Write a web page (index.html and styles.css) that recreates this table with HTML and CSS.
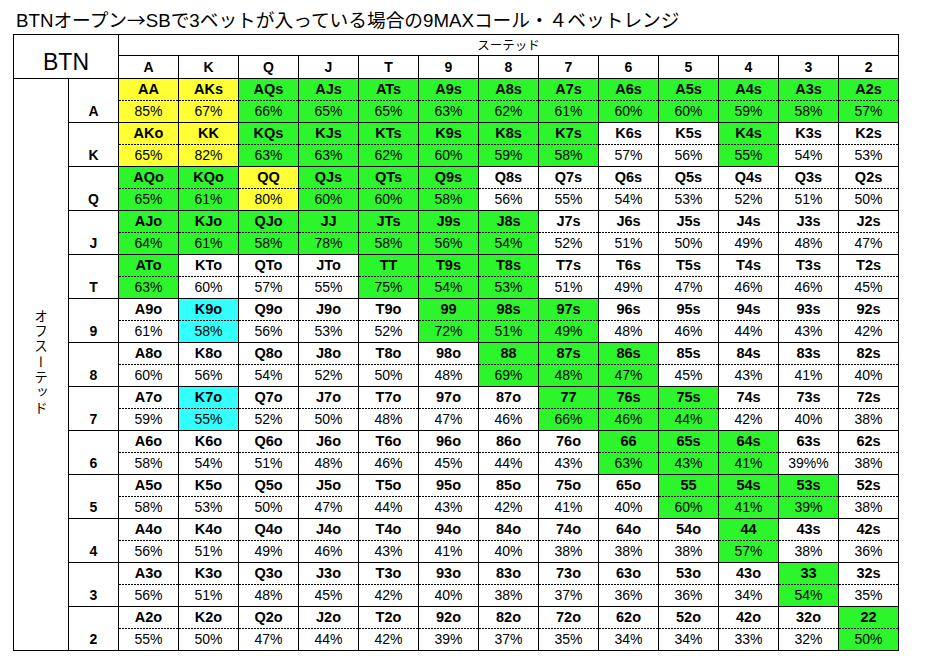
FILE: index.html
```html
<!DOCTYPE html>
<html lang="ja">
<head>
<meta charset="utf-8">
<title>BTN 9MAX range</title>
<link rel="stylesheet" href="styles.css">
</head>
<body>
<div class="page">
<div class="title">BTNオープン<span class="arrow">→</span>SBで3ベットが入っている場合の9MAXコール・４ベットレンジ</div>
<table class="range">
<colgroup><col class="c1"><col class="c2"><col class="cc"><col class="cc"><col class="cc"><col class="cc"><col class="cc"><col class="cc"><col class="cc"><col class="cc"><col class="cc"><col class="cc"><col class="cc"><col class="cc"><col class="cc"></colgroup>
<tr class="hr1"><th class="corner" colspan="2" rowspan="2">BTN</th><th class="suited" colspan="13">スーテッド</th></tr>
<tr class="hr2"><th>A</th><th>K</th><th>Q</th><th>J</th><th>T</th><th>9</th><th>8</th><th>7</th><th>6</th><th>5</th><th>4</th><th>3</th><th>2</th></tr>
<tr><th class="off" rowspan="13"><span>オフスーテッド</span></th><th class="rk"><span>A</span></th>
<td class="y"><div class="h">AA</div><div class="p">85%</div></td>
<td class="y"><div class="h">AKs</div><div class="p">67%</div></td>
<td class="g"><div class="h">AQs</div><div class="p">66%</div></td>
<td class="g"><div class="h">AJs</div><div class="p">65%</div></td>
<td class="g"><div class="h">ATs</div><div class="p">65%</div></td>
<td class="g"><div class="h">A9s</div><div class="p">63%</div></td>
<td class="g"><div class="h">A8s</div><div class="p">62%</div></td>
<td class="g"><div class="h">A7s</div><div class="p">61%</div></td>
<td class="g"><div class="h">A6s</div><div class="p">60%</div></td>
<td class="g"><div class="h">A5s</div><div class="p">60%</div></td>
<td class="g"><div class="h">A4s</div><div class="p">59%</div></td>
<td class="g"><div class="h">A3s</div><div class="p">58%</div></td>
<td class="g"><div class="h">A2s</div><div class="p">57%</div></td>
</tr>
<tr><th class="rk"><span>K</span></th>
<td class="y"><div class="h">AKo</div><div class="p">65%</div></td>
<td class="y"><div class="h">KK</div><div class="p">82%</div></td>
<td class="g"><div class="h">KQs</div><div class="p">63%</div></td>
<td class="g"><div class="h">KJs</div><div class="p">63%</div></td>
<td class="g"><div class="h">KTs</div><div class="p">62%</div></td>
<td class="g"><div class="h">K9s</div><div class="p">60%</div></td>
<td class="g"><div class="h">K8s</div><div class="p">59%</div></td>
<td class="g"><div class="h">K7s</div><div class="p">58%</div></td>
<td><div class="h">K6s</div><div class="p">57%</div></td>
<td><div class="h">K5s</div><div class="p">56%</div></td>
<td class="g"><div class="h">K4s</div><div class="p">55%</div></td>
<td><div class="h">K3s</div><div class="p">54%</div></td>
<td><div class="h">K2s</div><div class="p">53%</div></td>
</tr>
<tr><th class="rk"><span>Q</span></th>
<td class="g"><div class="h">AQo</div><div class="p">65%</div></td>
<td class="g"><div class="h">KQo</div><div class="p">61%</div></td>
<td class="y"><div class="h">QQ</div><div class="p">80%</div></td>
<td class="g"><div class="h">QJs</div><div class="p">60%</div></td>
<td class="g"><div class="h">QTs</div><div class="p">60%</div></td>
<td class="g"><div class="h">Q9s</div><div class="p">58%</div></td>
<td><div class="h">Q8s</div><div class="p">56%</div></td>
<td><div class="h">Q7s</div><div class="p">55%</div></td>
<td><div class="h">Q6s</div><div class="p">54%</div></td>
<td><div class="h">Q5s</div><div class="p">53%</div></td>
<td><div class="h">Q4s</div><div class="p">52%</div></td>
<td><div class="h">Q3s</div><div class="p">51%</div></td>
<td><div class="h">Q2s</div><div class="p">50%</div></td>
</tr>
<tr><th class="rk"><span>J</span></th>
<td class="g"><div class="h">AJo</div><div class="p">64%</div></td>
<td class="g"><div class="h">KJo</div><div class="p">61%</div></td>
<td class="g"><div class="h">QJo</div><div class="p">58%</div></td>
<td class="g"><div class="h">JJ</div><div class="p">78%</div></td>
<td class="g"><div class="h">JTs</div><div class="p">58%</div></td>
<td class="g"><div class="h">J9s</div><div class="p">56%</div></td>
<td class="g"><div class="h">J8s</div><div class="p">54%</div></td>
<td><div class="h">J7s</div><div class="p">52%</div></td>
<td><div class="h">J6s</div><div class="p">51%</div></td>
<td><div class="h">J5s</div><div class="p">50%</div></td>
<td><div class="h">J4s</div><div class="p">49%</div></td>
<td><div class="h">J3s</div><div class="p">48%</div></td>
<td><div class="h">J2s</div><div class="p">47%</div></td>
</tr>
<tr><th class="rk"><span>T</span></th>
<td class="g"><div class="h">ATo</div><div class="p">63%</div></td>
<td><div class="h">KTo</div><div class="p">60%</div></td>
<td><div class="h">QTo</div><div class="p">57%</div></td>
<td><div class="h">JTo</div><div class="p">55%</div></td>
<td class="g"><div class="h">TT</div><div class="p">75%</div></td>
<td class="g"><div class="h">T9s</div><div class="p">54%</div></td>
<td class="g"><div class="h">T8s</div><div class="p">53%</div></td>
<td><div class="h">T7s</div><div class="p">51%</div></td>
<td><div class="h">T6s</div><div class="p">49%</div></td>
<td><div class="h">T5s</div><div class="p">47%</div></td>
<td><div class="h">T4s</div><div class="p">46%</div></td>
<td><div class="h">T3s</div><div class="p">46%</div></td>
<td><div class="h">T2s</div><div class="p">45%</div></td>
</tr>
<tr><th class="rk"><span>9</span></th>
<td><div class="h">A9o</div><div class="p">61%</div></td>
<td class="c"><div class="h">K9o</div><div class="p">58%</div></td>
<td><div class="h">Q9o</div><div class="p">56%</div></td>
<td><div class="h">J9o</div><div class="p">53%</div></td>
<td><div class="h">T9o</div><div class="p">52%</div></td>
<td class="g"><div class="h">99</div><div class="p">72%</div></td>
<td class="g"><div class="h">98s</div><div class="p">51%</div></td>
<td class="g"><div class="h">97s</div><div class="p">49%</div></td>
<td><div class="h">96s</div><div class="p">48%</div></td>
<td><div class="h">95s</div><div class="p">46%</div></td>
<td><div class="h">94s</div><div class="p">44%</div></td>
<td><div class="h">93s</div><div class="p">43%</div></td>
<td><div class="h">92s</div><div class="p">42%</div></td>
</tr>
<tr><th class="rk"><span>8</span></th>
<td><div class="h">A8o</div><div class="p">60%</div></td>
<td><div class="h">K8o</div><div class="p">56%</div></td>
<td><div class="h">Q8o</div><div class="p">54%</div></td>
<td><div class="h">J8o</div><div class="p">52%</div></td>
<td><div class="h">T8o</div><div class="p">50%</div></td>
<td><div class="h">98o</div><div class="p">48%</div></td>
<td class="g"><div class="h">88</div><div class="p">69%</div></td>
<td class="g"><div class="h">87s</div><div class="p">48%</div></td>
<td class="g"><div class="h">86s</div><div class="p">47%</div></td>
<td><div class="h">85s</div><div class="p">45%</div></td>
<td><div class="h">84s</div><div class="p">43%</div></td>
<td><div class="h">83s</div><div class="p">41%</div></td>
<td><div class="h">82s</div><div class="p">40%</div></td>
</tr>
<tr><th class="rk"><span>7</span></th>
<td><div class="h">A7o</div><div class="p">59%</div></td>
<td class="c"><div class="h">K7o</div><div class="p">55%</div></td>
<td><div class="h">Q7o</div><div class="p">52%</div></td>
<td><div class="h">J7o</div><div class="p">50%</div></td>
<td><div class="h">T7o</div><div class="p">48%</div></td>
<td><div class="h">97o</div><div class="p">47%</div></td>
<td><div class="h">87o</div><div class="p">46%</div></td>
<td class="g"><div class="h">77</div><div class="p">66%</div></td>
<td class="g"><div class="h">76s</div><div class="p">46%</div></td>
<td class="g"><div class="h">75s</div><div class="p">44%</div></td>
<td><div class="h">74s</div><div class="p">42%</div></td>
<td><div class="h">73s</div><div class="p">40%</div></td>
<td><div class="h">72s</div><div class="p">38%</div></td>
</tr>
<tr><th class="rk"><span>6</span></th>
<td><div class="h">A6o</div><div class="p">58%</div></td>
<td><div class="h">K6o</div><div class="p">54%</div></td>
<td><div class="h">Q6o</div><div class="p">51%</div></td>
<td><div class="h">J6o</div><div class="p">48%</div></td>
<td><div class="h">T6o</div><div class="p">46%</div></td>
<td><div class="h">96o</div><div class="p">45%</div></td>
<td><div class="h">86o</div><div class="p">44%</div></td>
<td><div class="h">76o</div><div class="p">43%</div></td>
<td class="g"><div class="h">66</div><div class="p">63%</div></td>
<td class="g"><div class="h">65s</div><div class="p">43%</div></td>
<td class="g"><div class="h">64s</div><div class="p">41%</div></td>
<td><div class="h">63s</div><div class="p">39%%</div></td>
<td><div class="h">62s</div><div class="p">38%</div></td>
</tr>
<tr><th class="rk"><span>5</span></th>
<td><div class="h">A5o</div><div class="p">58%</div></td>
<td><div class="h">K5o</div><div class="p">53%</div></td>
<td><div class="h">Q5o</div><div class="p">50%</div></td>
<td><div class="h">J5o</div><div class="p">47%</div></td>
<td><div class="h">T5o</div><div class="p">44%</div></td>
<td><div class="h">95o</div><div class="p">43%</div></td>
<td><div class="h">85o</div><div class="p">42%</div></td>
<td><div class="h">75o</div><div class="p">41%</div></td>
<td><div class="h">65o</div><div class="p">40%</div></td>
<td class="g"><div class="h">55</div><div class="p">60%</div></td>
<td class="g"><div class="h">54s</div><div class="p">41%</div></td>
<td class="g"><div class="h">53s</div><div class="p">39%</div></td>
<td><div class="h">52s</div><div class="p">38%</div></td>
</tr>
<tr><th class="rk"><span>4</span></th>
<td><div class="h">A4o</div><div class="p">56%</div></td>
<td><div class="h">K4o</div><div class="p">51%</div></td>
<td><div class="h">Q4o</div><div class="p">49%</div></td>
<td><div class="h">J4o</div><div class="p">46%</div></td>
<td><div class="h">T4o</div><div class="p">43%</div></td>
<td><div class="h">94o</div><div class="p">41%</div></td>
<td><div class="h">84o</div><div class="p">40%</div></td>
<td><div class="h">74o</div><div class="p">38%</div></td>
<td><div class="h">64o</div><div class="p">38%</div></td>
<td><div class="h">54o</div><div class="p">38%</div></td>
<td class="g"><div class="h">44</div><div class="p">57%</div></td>
<td><div class="h">43s</div><div class="p">38%</div></td>
<td><div class="h">42s</div><div class="p">36%</div></td>
</tr>
<tr><th class="rk"><span>3</span></th>
<td><div class="h">A3o</div><div class="p">56%</div></td>
<td><div class="h">K3o</div><div class="p">51%</div></td>
<td><div class="h">Q3o</div><div class="p">48%</div></td>
<td><div class="h">J3o</div><div class="p">45%</div></td>
<td><div class="h">T3o</div><div class="p">42%</div></td>
<td><div class="h">93o</div><div class="p">40%</div></td>
<td><div class="h">83o</div><div class="p">38%</div></td>
<td><div class="h">73o</div><div class="p">37%</div></td>
<td><div class="h">63o</div><div class="p">36%</div></td>
<td><div class="h">53o</div><div class="p">36%</div></td>
<td><div class="h">43o</div><div class="p">34%</div></td>
<td class="g"><div class="h">33</div><div class="p">54%</div></td>
<td><div class="h">32s</div><div class="p">35%</div></td>
</tr>
<tr><th class="rk"><span>2</span></th>
<td><div class="h">A2o</div><div class="p">55%</div></td>
<td><div class="h">K2o</div><div class="p">50%</div></td>
<td><div class="h">Q2o</div><div class="p">47%</div></td>
<td><div class="h">J2o</div><div class="p">44%</div></td>
<td><div class="h">T2o</div><div class="p">42%</div></td>
<td><div class="h">92o</div><div class="p">39%</div></td>
<td><div class="h">82o</div><div class="p">37%</div></td>
<td><div class="h">72o</div><div class="p">35%</div></td>
<td><div class="h">62o</div><div class="p">34%</div></td>
<td><div class="h">52o</div><div class="p">34%</div></td>
<td><div class="h">42o</div><div class="p">33%</div></td>
<td><div class="h">32o</div><div class="p">32%</div></td>
<td class="g"><div class="h">22</div><div class="p">50%</div></td>
</tr>
</table>
</div>
</body>
</html>
```
FILE: styles.css
```css
html, body {
  margin: 0;
  padding: 0;
  background: #ffffff;
}
body {
  font-family: "Liberation Sans", "Noto Sans CJK JP", sans-serif;
  color: #000000;
}
.page {
  padding: 6px 0 0 13px;
}
.title {
  margin-left: 3px;
  font-size: 18.7px;
  line-height: 26px;
  height: 28px;
  white-space: nowrap;
}
.arrow {
  font-family: "Noto Sans CJK JP", sans-serif;
}
.range {
  border-collapse: collapse;
  table-layout: fixed;
  width: 886px;
}
.c1 { width: 55px; }
.c2 { width: 50px; }
.cc { width: 60px; }
.range th,
.range td {
  border: 1px solid #000;
  padding: 0;
  text-align: center;
}
.range th {
  font-weight: bold;
  font-size: 14px;
}
.hr1 th {
  height: 20px;
}
.hr2 th {
  height: 22px;
  line-height: 22px;
  vertical-align: middle;
}
.corner {
  font-size: 23px !important;
  font-weight: normal !important;
  line-height: 23px;
  vertical-align: bottom;
  padding-bottom: 4px !important;
}
.suited {
  font-size: 12.5px !important;
  font-weight: normal !important;
  font-family: "Noto Sans CJK JP", sans-serif;
  line-height: 20px;
  vertical-align: middle;
}
.off {
  font-weight: normal !important;
  vertical-align: middle;
}
.off span {
  writing-mode: vertical-rl;
  font-family: "Noto Sans CJK JP", sans-serif;
  font-size: 13.5px;
  letter-spacing: 1.8px;
  display: inline-block;
}
.rk {
  vertical-align: bottom;
}
.rk span {
  display: block;
  line-height: 21px;
}
.range td {
  vertical-align: top;
}
.h {
  height: 21px;
  line-height: 21px;
  font-size: 14.5px;
  font-weight: bold;
  background-image: repeating-linear-gradient(to right, #000 0, #000 2px, transparent 2px, transparent 3px);
  background-size: 100% 1px;
  background-position: left bottom;
  background-repeat: no-repeat;
  padding-bottom: 1px;
}
.p {
  height: 21px;
  line-height: 21px;
  font-size: 14px;
}
.y { background: #ffff33; }
.g { background: #2cf52c; }
.c { background: #33ffff; }
```
